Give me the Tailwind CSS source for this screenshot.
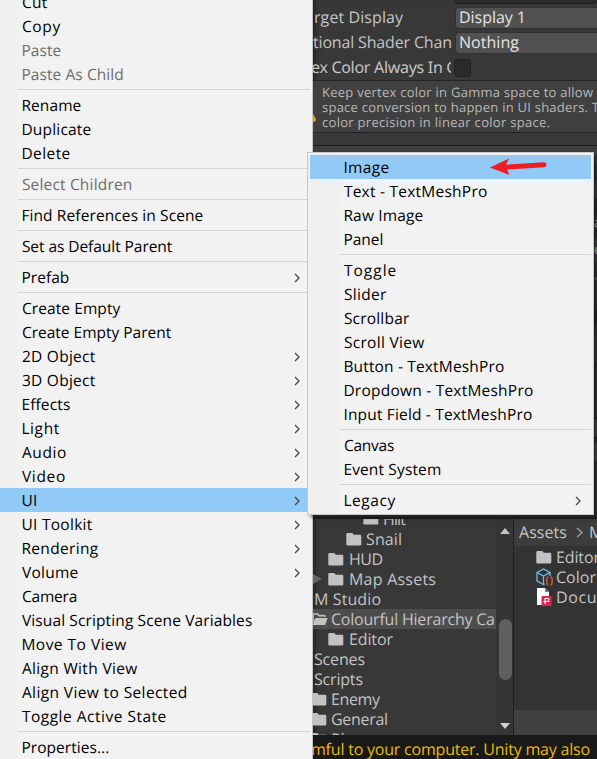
<!DOCTYPE html>
<html lang="en">
<head>
<meta charset="utf-8">
<title>Editor</title>
<script src="https://cdn.jsdelivr.net/npm/@tailwindcss/browser@4"></script>
</head>
<body class="relative flex h-[759px] w-[597px] overflow-hidden bg-[#383838] font-['Open_Sans','Noto_Sans',sans-serif] text-[15.5px] text-black [text-rendering:geometricPrecision]">

<svg class="hidden">
  <symbol id="folder" viewBox="0 0 16 13"><path d="M1.5 0H6.3L7.8 1.7H14Q15.3 1.7 15.3 3V11.4Q15.3 12.5 14 12.5H1.5Q.3 12.5 .3 11.4V1.2Q.3 0 1.5 0Z" fill="#c2c2c2"/></symbol>
  <symbol id="folder-open" viewBox="0 0 16 13"><path d="M1 9V2Q1 1 2 1H5.5L7 2.6H12Q13 2.6 13 4" fill="none" stroke="#c2c2c2" stroke-width="1.6"/><path d="M3.3 5H15.6L13.2 12H.6Z" fill="#c2c2c2"/></symbol>
  <symbol id="chev" viewBox="0 0 6 10"><path d="M1 1L5 5L1 9" fill="none" stroke="#444" stroke-width="1.3"/></symbol>
</svg>

<!-- Context menu -->
<nav class="h-[759px] w-[313px] shrink-0 overflow-hidden border-r border-[#c4c4c4] bg-[linear-gradient(to_right,#f0f0f0_18px,#f2f2f2_18px)]">
  <div id="main" class="-mt-[10px]"></div>
</nav>

<!-- Editor panels -->
<main class="flex w-[284px] shrink-0 flex-col overflow-hidden text-[16px] text-[#c4c4c4]">
  <section class="h-[517px] shrink-0 overflow-hidden shadow-[inset_5px_0_5px_-3px_rgba(0,0,0,0.45)]">
    <div class="flex h-[4px] justify-end"><div class="w-[142px] rounded-b-sm border-b border-[#1a1a1a] bg-[#2a2a2a]"></div></div>
    <div class="mt-[2px] flex h-[23px] items-center justify-between">
      <div class="w-[139px] overflow-hidden whitespace-nowrap pb-[2px] leading-[22px]"><span class="ml-px" data-w="89">rget Display</span></div>
      <div class="h-[22px] w-[142px] rounded-l-sm border border-r-0 border-[#303030] bg-[#515151] pl-[3px] leading-[19px] text-[#e4e4e4]"><span data-w="67">Display 1</span></div>
    </div>
    <div class="mt-[2px] flex h-[23px] items-center justify-between">
      <div class="w-[139px] overflow-hidden whitespace-nowrap pb-[2px] leading-[22px]"><span data-w="139">tional Shader Chan</span></div>
      <div class="h-[22px] w-[142px] rounded-l-sm border border-r-0 border-[#303030] bg-[#515151] pl-[3px] leading-[19px] text-[#e4e4e4]"><span data-w="60">Nothing</span></div>
    </div>
    <div class="flex h-[25px] items-center">
      <div class="w-[138px] overflow-hidden whitespace-nowrap pt-px font-['Noto_Sans'] leading-[24px]"><span class="-ml-[2px]" data-font="Noto Sans" data-w="147">ex Color Always In G</span></div>
      <div class="mt-[2px] ml-[3px] h-[18px] w-[17px] rounded-sm border border-[#202020] bg-[#2a2a2a]"></div>
    </div>
    <div class="mt-px flex h-[53px] border-y border-[#232323] bg-[#404040] pt-[4px] text-[13px] leading-[15px] text-[#b8b8b8]">
      <svg class="mt-[29px] mr-px h-[10px] w-[8px] shrink-0" viewBox="0 0 8 10"><path d="M0 0L3 5Q3 8 0 8Z" fill="#d9a300"/></svg>
      <div class="whitespace-nowrap">
        <div><span data-size="13" data-w="271">Keep vertex color in Gamma space to allow</span></div>
        <div><span data-size="13" data-w="277">space conversion to happen in UI shaders. T</span></div>
        <div><span data-size="13" data-w="228">color precision in linear color space.</span></div>
      </div>
    </div>
    <div class="h-[12px] bg-[#383838]"></div>
    <div class="h-[20px] border-t border-[#1c1c1c] bg-[#3e3e3e]"></div>
    <div class="flex h-[353px] justify-end">
      <div class="w-[3px] overflow-hidden bg-[#333]">
        <div class="mt-[13px] h-[22px] border-y border-[#222] bg-[#404040]"></div>
        <div class="h-[14px] bg-[#2a2a2a]"></div>
        <div class="mt-[3px] h-[10px] text-[13px] leading-[10px]">a</div>
        <div class="mt-[12px] h-[24px] bg-[#424242] text-[13px] leading-[20px]">e</div>
        <div class="mt-[14px] h-[3px] bg-[#555]"></div>
        <div class="mt-[30px] h-[14px] bg-[#242424]"></div>
        <div class="mt-[10px] h-[28px] border-t border-[#222] bg-[#3e3e3e]"></div>
        <div class="mt-[56px] h-[20px] border-y border-[#222] bg-[#484848]"></div>
        <div class="mt-[3px] h-[22px] border-y border-[#222] bg-[#484848]"></div>
      </div>
    </div>
  </section>

  <section class="flex h-[218px] shrink-0 border-t-2 border-[#202020]">
    <div class="relative flex h-[216px] w-[183px] flex-col overflow-hidden whitespace-nowrap leading-[20px] shadow-[inset_5px_0_5px_-3px_rgba(0,0,0,0.4)]">
      <div class="-mt-[11px] flex h-[21px] shrink-0 items-center pl-[50px]"><svg class="mr-[4px] h-[13px] w-[16px]"><use href="#folder"/></svg><span data-w="23">Hilt</span></div>
      <div class="flex h-[20px] shrink-0 items-center pl-[33px]"><svg class="mr-[4px] h-[13px] w-[16px]"><use href="#folder"/></svg><span data-w="36">Snail</span></div>
      <div class="flex h-[20px] shrink-0 items-center pl-[15px]"><svg class="mr-[5px] h-[13px] w-[16px]"><use href="#folder"/></svg><span data-w="34">HUD</span></div>
      <div class="flex h-[20px] shrink-0 items-center"><svg class="mr-[6px] h-[10px] w-[9px]" viewBox="0 0 9 10"><path d="M0 0L9 5L0 10Z" fill="#666"/></svg><svg class="mr-[5px] h-[13px] w-[16px]"><use href="#folder"/></svg><span data-w="87">Map Assets</span></div>
      <div class="h-[20px] shrink-0 pl-px"><span data-w="67">M Studio</span></div>
      <div class="flex h-[20px] shrink-0 items-center overflow-hidden bg-[#4d4d4d]"><svg class="mr-[3px] -ml-px h-[13px] w-[16px] shrink-0"><use href="#folder-open"/></svg><span data-w="164">Colourful Hierarchy Ca</span></div>
      <div class="flex h-[20px] shrink-0 items-center pl-[15px]"><svg class="mr-[5px] h-[13px] w-[16px]"><use href="#folder"/></svg><span data-w="44">Editor</span></div>
      <div class="h-[20px] shrink-0 pl-px"><span data-w="51">Scenes</span></div>
      <div class="h-[20px] shrink-0 pl-px"><span data-w="49">Scripts</span></div>
      <div class="flex h-[20px] shrink-0 items-center"><svg class="mr-[4px] -ml-[2px] h-[13px] w-[16px]"><use href="#folder"/></svg><span data-w="49">Enemy</span></div>
      <div class="flex h-[20px] shrink-0 items-center"><svg class="mr-[4px] -ml-[2px] h-[13px] w-[16px]"><use href="#folder"/></svg><span data-w="57">General</span></div>
      <div class="flex h-[20px] shrink-0 items-center"><svg class="mr-[4px] -ml-[2px] h-[13px] w-[16px]"><use href="#folder"/></svg><span data-w="46">Player</span></div>
    </div>
    <div class="flex h-[216px] w-[18px] flex-col items-center border-r border-[#202020] bg-[#353535]">
      <svg class="mt-[9px] h-[6px] w-[10px]" viewBox="0 0 10 6"><path d="M0 6L5 0L10 6Z" fill="#c4c4c4"/></svg>
      <div class="mt-[85px] ml-px h-[61px] w-[13px] rounded-full bg-[#5f5f5f]"></div>
      <svg class="mt-[43px] h-[6px] w-[10px]" viewBox="0 0 10 6"><path d="M0 0L5 6L10 0Z" fill="#d0d0d0"/></svg>
    </div>
    <div class="flex h-[216px] w-[83px] flex-col overflow-hidden whitespace-nowrap bg-[#333]">
      <div class="flex h-[27px] shrink-0 items-center bg-[#3c3c3c] pb-[2px] pl-[5px]"><span data-w="48">Assets</span><svg class="mt-[2px] mr-[6px] ml-[9px] h-[11px] w-[8px] shrink-0" viewBox="0 0 8 11"><path d="M1 1L6 5.5L1 10" fill="none" stroke="#999" stroke-width="1.6"/></svg><span class="-ml-px">M</span></div>
      <div class="mt-px flex h-[20px] shrink-0 items-center pl-[22px]"><svg class="mr-[4px] h-[13px] w-[16px] shrink-0"><use href="#folder"/></svg><span data-w="44">Editor</span></div>
      <div class="flex h-[20px] shrink-0 items-center pl-[22px]">
        <svg class="mr-[2px] h-[18px] w-[18px] shrink-0" viewBox="0 0 18 18" fill="none"><path d="M9 16L7.5 16.5L1 13V4.5L7.5 1L14 4.5V8M1 4.5L7.5 8L14 4.5M7.5 8V16" stroke="#69bfe8" stroke-width="1.3"/><path d="M12.5 9Q11 9 11 10.5V12Q11 13 10 13Q11 13 11 14V15.5Q11 17 12.5 17M14.5 9Q16 9 16 10.5V12Q16 13 17 13Q16 13 16 14V15.5Q16 17 14.5 17" stroke="#e0582a" stroke-width="1.4"/></svg><span data-w="40">Color</span></div>
      <div class="flex h-[20px] shrink-0 items-center pl-[22px]">
        <svg class="mr-[4px] h-[18px] w-[16px] shrink-0" viewBox="0 0 16 18"><path d="M1 0H9L13 4V17H1Z" fill="#fff"/><path d="M9 0V4H13Z" fill="#777"/><rect x="5.5" y="8" width="10" height="10" rx="1" fill="#dd2450"/><path d="M9 16V10.5H12Q13 10.5 13 12T11.5 13.5H7.5" fill="none" stroke="#fff" stroke-width="1.1"/></svg><span data-w="56">Docum</span></div>
      <div class="mt-auto h-[25px] shrink-0 bg-[#404040]"></div>
    </div>
  </section>
  <footer class="h-[24px] shrink-0 overflow-hidden whitespace-nowrap bg-[#191919] leading-[28px] text-[#eab90c]"><span class="-ml-[2px]" data-w="279">mful to your computer. Unity may also</span></footer>
</main>

<!-- Submenu over the panels -->
<nav class="absolute top-[152px] left-[307px] h-[363px] w-[287px] border border-[#c8c8c8] bg-[linear-gradient(to_right,#f0f0f0_32px,#f2f2f2_32px)] px-[2px] py-[2px] shadow-[3px_3px_3px_rgba(0,0,0,0.4)]">
  <div id="sub"></div>
  <svg class="absolute top-[4px] left-[182px] h-[20px] w-[60px]" viewBox="0 0 60 20"><path d="M0 10.5L19 1.5L16 7.7L54 5.2Q56.5 5.5 56.5 7.7Q56.5 10 54 10.3L17 12.5L19.5 18Z" fill="#ee1c25"/></svg>
</nav>

<script>
// Each item: [label, right edge of the label, flags]; null is a separator.
const main = [["Cut",47],["Copy",60],["Paste",61,"d"],["Paste As Child",123.5,"d"],null,
["Rename",81],["Duplicate",91],["Delete",70],null,["Select Children",132,"d"],null,
["Find References in Scene",203],null,["Set as Default Parent",172],null,["Prefab",69,"a"],null,
["Create Empty",120],["Create Empty Parent",171],["2D Object",95,"a"],["3D Object",95,"a"],["Effects",70,"a"],
["Light",59,"a"],["Audio",66,"a"],["Video",65,"a"],["UI",37,"ah"],["UI Toolkit",92,"a"],["Rendering",98,"a"],
["Volume",78,"a"],["Camera",77],["Visual Scripting Scene Variables",252],["Move To View",126],["Align With View",137],
["Align View to Selected",187],["Toggle Active State",166],null,["Properties...",109]];
const sub = [["Image",389,"h"],["Text - TextMeshPro",487],["Raw Image",423],["Panel",383],null,
["Toggle",396],["Slider",386],["Scrollbar",409],["Scroll View",424],["Button - TextMeshPro",504],
["Dropdown - TextMeshPro",533],["Input Field - TextMeshPro",532],null,["Canvas",394],["Event System",441],null,["Legacy",395,"a"]];
function build(id, items, origin, pad, line, arrow) {
  document.getElementById(id).innerHTML = items.map(it => {
    if (!it) return `<div class="h-[7px] pt-[3px] ${line}"><div class="h-px bg-[#d4d4d4]"></div></div>`;
    const f = it[2] || "";
    // Round and open letters start closer to the pen position than stems do.
    const lead = /^[BDEFILPRUM]/.test(it[0]) ? 0 : 0.5;
    return `<div class="flex h-[24px] items-center justify-between whitespace-nowrap ${pad} ${f.includes("h") ? "bg-[#91c9f7]" : ""} ${f.includes("d") ? "text-[#6d6d6d]" : ""}"><span class="leading-[22px] ${lead ? "ml-[0.9px]" : "ml-[0.4px]"}" data-size="15.5" data-w="${it[1] - origin - 0.1 - lead}">${it[0]}</span>${f.includes("a") ? `<svg class="mt-px h-[10px] w-[6px] ${arrow}"><use href="#chev"/></svg>` : ""}</div>`;
  }).join("");
}
build("main", main, 21, "pl-[21px]", "pl-[18px] pr-[2px]", "mr-[12px]");
build("sub", sub, 343, "pl-[33px]", "pl-[30px]", "mr-[10px]");
// Spread the letters so that every label takes its given width.
const ctx = document.createElement("canvas").getContext("2d");
for (const el of document.querySelectorAll("[data-w]")) {
  el.classList.add("inline-block", "shrink-0", "whitespace-nowrap");
  ctx.font = `${el.dataset.size || 16}px "${el.dataset.font || "Open Sans"}"`;
  ctx.textRendering = "geometricPrecision";
  const n = el.textContent.length;
  el.style.letterSpacing = (el.dataset.w - ctx.measureText(el.textContent).width) / (n - 1) + "px";
}
</script>
</body>
</html>
